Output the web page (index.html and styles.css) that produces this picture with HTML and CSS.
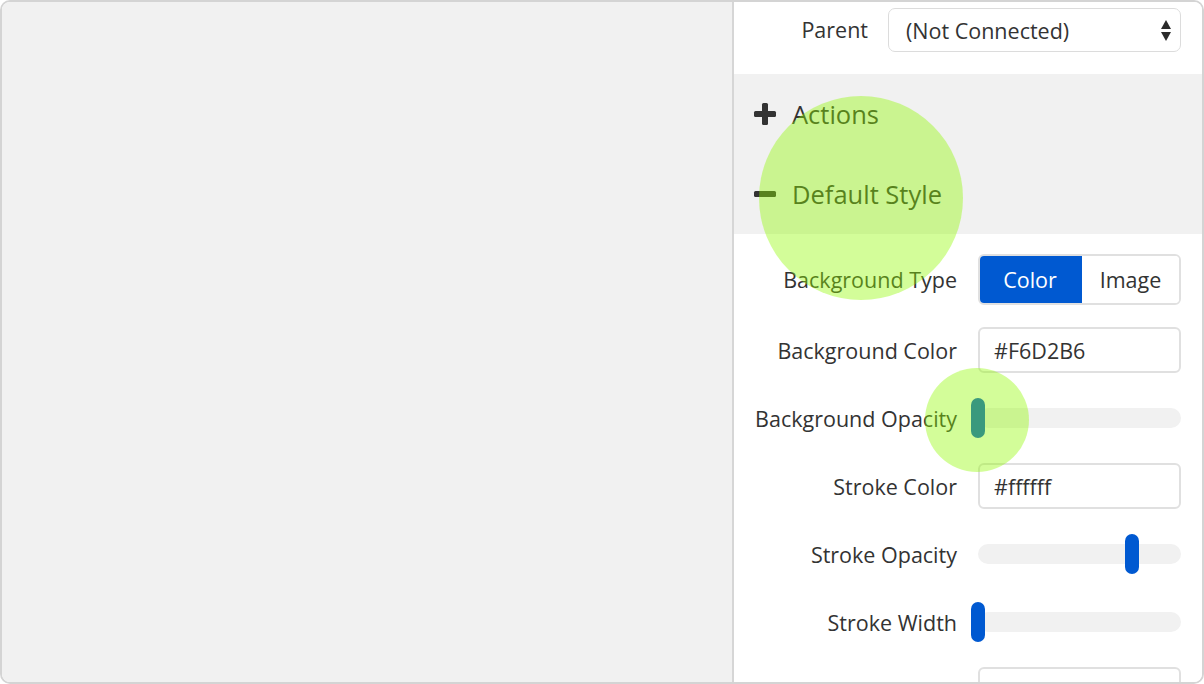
FILE: index.html
```html
<!DOCTYPE html>
<html>
<head>
<meta charset="utf-8">
<link rel="stylesheet" href="styles.css">
</head>
<body>
<div class="frame">
  <div class="canvas"></div>
  <div class="panel">
    <div class="parent-row">
      <span class="label">Parent</span>
      <div class="select">
        <span>(Not Connected)</span>
        <span class="arrows"><span class="up"></span><span class="down"></span></span>
      </div>
    </div>
    <div class="sections">
      <div class="section-title">
        <span class="icon plus"><span class="h"></span><span class="v"></span></span>
        <span>Actions</span>
      </div>
      <div class="section-title">
        <span class="icon minus"><span class="h"></span></span>
        <span>Default Style</span>
      </div>
    </div>
    <div class="fields">
      <div class="row row-type">
        <span class="label">Background Type</span>
        <div class="segmented">
          <span class="seg active">Color</span>
          <span class="seg">Image</span>
        </div>
      </div>
      <div class="row">
        <span class="label">Background Color</span>
        <div class="input">#F6D2B6</div>
      </div>
      <div class="row">
        <span class="label">Background Opacity</span>
        <div class="slider"><span class="thumb" style="left: 0%"></span></div>
      </div>
      <div class="row">
        <span class="label">Stroke Color</span>
        <div class="input">#ffffff</div>
      </div>
      <div class="row">
        <span class="label">Stroke Opacity</span>
        <div class="slider"><span class="thumb" style="left: 76%"></span></div>
      </div>
      <div class="row">
        <span class="label">Stroke Width</span>
        <div class="slider"><span class="thumb" style="left: 0%"></span></div>
      </div>
      <div class="row">
        <span class="label">Stroke Dasharray</span>
        <div class="input"></div>
      </div>
    </div>
  </div>
  <span class="tap tap-big"></span>
  <span class="tap tap-small"></span>
</div>
</body>
</html>
```

FILE: styles.css
```css
* { box-sizing: border-box; }
html, body { margin: 0; padding: 0; background: #ffffff; }
body {
  font-family: "Open Sans", "Noto Sans", sans-serif;
  color: #333333;
}
.frame {
  position: relative;
  width: 1204px;
  height: 684px;
  border: 2px solid #d4d4d4;
  border-radius: 10px;
  overflow: hidden;
  display: flex;
}
.canvas {
  width: 730px;
  flex: none;
  background: #f1f1f1;
}
.panel {
  flex: 1;
  border-left: 2px solid #d6d6d6;
  background: #ffffff;
  display: flex;
  flex-direction: column;
  overflow: hidden;
}
.label {
  font-size: 21.5px;
  color: #333333;
  white-space: nowrap;
}
.parent-row {
  flex: none;
  height: 72px;
  display: flex;
  align-items: flex-start;
  padding-top: 6px;
  padding-right: 21px;
  justify-content: flex-end;
  gap: 20px;
}
.parent-row .label { line-height: 44px; }
.select {
  width: 293px;
  height: 44px;
  border: 1px solid #dcdcdc;
  border-radius: 7px;
  display: flex;
  align-items: center;
  justify-content: space-between;
  padding: 0 9px 0 17px;
  font-size: 21.5px;
}
.arrows {
  display: flex;
  flex-direction: column;
  gap: 3px;
}
.arrows .up {
  width: 0; height: 0;
  border-left: 5.5px solid transparent;
  border-right: 5.5px solid transparent;
  border-bottom: 9px solid #2b2b2b;
}
.arrows .down {
  width: 0; height: 0;
  border-left: 5.5px solid transparent;
  border-right: 5.5px solid transparent;
  border-top: 9px solid #2b2b2b;
}
.sections {
  flex: none;
  background: #f1f1f1;
  height: 160px;
  display: flex;
  flex-direction: column;
}
.section-title {
  height: 80px;
  display: flex;
  align-items: center;
  padding-left: 20px;
  gap: 16px;
  font-size: 25.5px;
  color: #333333;
}
.icon {
  position: relative;
  width: 22px;
  height: 22px;
  flex: none;
}
.icon .h {
  position: absolute;
  left: 0; right: 0;
  top: 8px;
  height: 6px;
  border-radius: 1.5px;
  background: #333333;
}
.icon .v {
  position: absolute;
  top: 0; bottom: 0;
  left: 8px;
  width: 6px;
  border-radius: 1.5px;
  background: #333333;
}
.fields {
  flex: none;
  display: flex;
  flex-direction: column;
  gap: 22px;
  padding-top: 20px;
}
.row {
  height: 46px;
  display: flex;
  align-items: center;
  justify-content: flex-end;
  gap: 21px;
  padding-right: 21px;
  flex: none;
}
.row-type { height: 51px; }
.segmented {
  width: 203px;
  height: 51px;
  display: flex;
  border: 2px solid #e0e0e0;
  border-radius: 6px;
  overflow: hidden;
  font-size: 21.5px;
}
.seg {
  flex: 1;
  display: flex;
  align-items: center;
  justify-content: center;
  background: #ffffff;
  color: #333333;
}
.seg.active {
  flex: none;
  width: 104px;
  margin: -2px 0 -2px -2px;
  background: #0059d1;
  color: #ffffff;
}
.input {
  width: 203px;
  height: 46px;
  border: 2px solid #e0e0e0;
  border-radius: 6px;
  padding-left: 14px;
  display: flex;
  align-items: center;
  font-size: 21.5px;
  color: #333333;
}
.slider {
  position: relative;
  width: 203px;
  height: 20px;
  border-radius: 10px;
  background: #f1f1f1;
}
.thumb {
  position: absolute;
  top: -10px;
  width: 14px;
  height: 40px;
  margin-left: -7px;
  border-radius: 7px;
  background: #0059d1;
}
.tap {
  position: absolute;
  border-radius: 50%;
  background: rgba(145, 251, 0, 0.4);
  pointer-events: none;
}
.tap-big {
  left: 757px;
  top: 94px;
  width: 204px;
  height: 204px;
}
.tap-small {
  left: 923px;
  top: 366px;
  width: 104px;
  height: 104px;
}
```
